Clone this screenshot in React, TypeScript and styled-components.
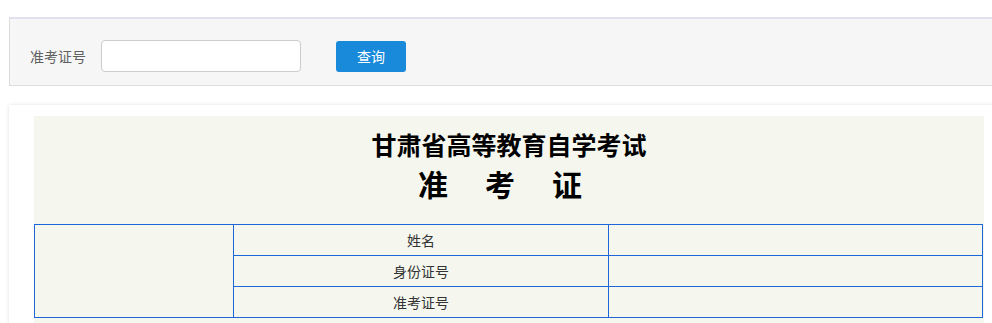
import React from "react";
import styled, { createGlobalStyle } from "styled-components";

const Global = createGlobalStyle`
  html, body { margin: 0; padding: 0; background: #fff; }
  body { font-family: "Noto Sans CJK SC", "Noto Sans", sans-serif; overflow: hidden; }
`;

const Page = styled.div`
  padding: 17px 0 0 9px;
`;

const SearchBar = styled.form`
  display: flex;
  align-items: center;
  background: #f6f6f6;
  border-top: 2px solid #e1e0ee;
  border-left: 1px solid #dcdcdc;
  border-bottom: 1px solid #dcdcdc;
  padding: 21px 0 13px 20px;
  margin: 0;
`;

const Label = styled.label`
  font-size: 14px;
  color: #5f5f5f;
  line-height: 20px;
  margin-right: 15px;
`;

const Input = styled.input`
  box-sizing: border-box;
  width: 200px;
  height: 32px;
  border: 1px solid #cccccc;
  border-radius: 4px;
  background: #fff;
  outline: none;
`;

const Button = styled.button`
  box-sizing: border-box;
  margin-left: 35px;
  width: 70px;
  height: 31px;
  border: none;
  border-radius: 3px;
  background: #188ad9;
  color: #fff;
  font-family: "Noto Sans CJK SC", sans-serif;
  font-size: 14px;
  line-height: 31px;
  padding: 0;
`;

const Panel = styled.div`
  margin-top: 19px;
  background: #fff;
  box-shadow: 0 0 4px rgba(0, 0, 0, 0.12);
  padding: 11px 0 20px 25px;
  width: 1000px;
`;

const Cert = styled.div`
  width: 950px;
  background: #f5f7ef;
  padding: 13px 0 20px;
`;

const Title = styled.h1`
  margin: 0;
  text-align: center;
  font-size: 25px;
  line-height: 30px;
  font-weight: bold;
  color: #000;
`;

const SubTitle = styled.h2`
  margin: 4px 0 21px;
  display: flex;
  justify-content: center;
  gap: 37px;
  padding-right: 18px;
  font-size: 30px;
  line-height: 40px;
  font-weight: bold;
  color: #000;
`;

const Table = styled.table`
  width: 949px;
  border-collapse: collapse;
  table-layout: fixed;
`;

const Cell = styled.td<{ $w?: number }>`
  border: 1px solid #1c66d8;
  height: 30px;
  padding: 0;
  font-size: 14px;
  color: #333;
  text-align: center;
  ${(p) => (p.$w ? `width: ${p.$w}px;` : "")}
`;

const rows = ["姓名", "身份证号", "准考证号"];

export default function App() {
  return (
    <>
      <Global />
      <Page>
        <SearchBar onSubmit={(e) => e.preventDefault()}>
          <Label>准考证号</Label>
          <Input type="text" />
          <Button type="submit">查询</Button>
        </SearchBar>
        <Panel>
          <Cert>
            <Title>甘肃省高等教育自学考试</Title>
            <SubTitle>
              <span>准</span>
              <span>考</span>
              <span>证</span>
            </SubTitle>
            <Table>
              <tbody>
                {rows.map((r, i) => (
                  <tr key={r}>
                    {i === 0 && <Cell $w={198} rowSpan={3} />}
                    <Cell $w={374}>{r}</Cell>
                    <Cell />
                  </tr>
                ))}
              </tbody>
            </Table>
          </Cert>
        </Panel>
      </Page>
    </>
  );
}
